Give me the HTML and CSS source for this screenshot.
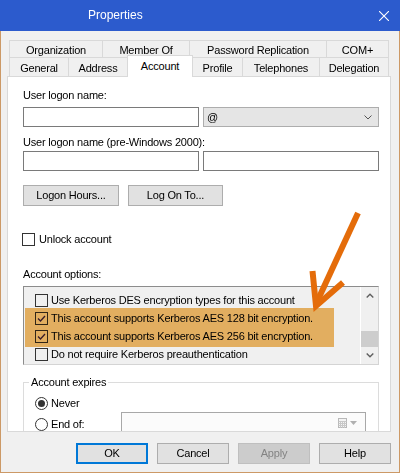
FILE: index.html
```html
<!DOCTYPE html>
<html>
<head>
<meta charset="utf-8">
<link rel="stylesheet" href="styles.css">
</head>
<body>
<div class="window">
  <div class="titlebar">
    <span class="title">Properties</span>
    <svg class="close" width="10" height="10" viewBox="0 0 10 10"><path d="M0 0L10 10M10 0L0 10" stroke="#fff" stroke-width="1.1" fill="none"/></svg>
  </div>
  <div class="client">
    <div class="tabs">
      <div class="tabrow row1">
        <div class="tab t-org">Organization</div>
        <div class="tab t-mem">Member Of</div>
        <div class="tab t-pwd">Password Replication</div>
        <div class="tab t-com last">COM+</div>
      </div>
      <div class="tabrow row2">
        <div class="tab t-gen">General</div>
        <div class="tab t-adr">Address</div>
        <div class="tab t-acc active">Account</div>
        <div class="tab t-pro">Profile</div>
        <div class="tab t-tel">Telephones</div>
        <div class="tab t-del last">Delegation</div>
      </div>
    </div>
    <div class="panel">
      <div class="label l1">User logon name:</div>
      <div class="field-row r1">
        <div class="input"></div>
        <div class="select"><span class="at">@</span><svg class="chev" width="8" height="5" viewBox="0 0 8 5"><path d="M0.5 0.5L4 4L7.5 0.5" stroke="#555" stroke-width="1" fill="none"/></svg></div>
      </div>
      <div class="label l2">User logon name (pre-Windows 2000):</div>
      <div class="field-row r2">
        <div class="input"></div>
        <div class="input wide"></div>
      </div>
      <div class="btn-row">
        <div class="btn b-hours">Logon Hours...</div>
        <div class="btn b-logon">Log On To...</div>
      </div>
      <div class="check-row unlock">
        <span class="cb"></span><span class="txt">Unlock account</span>
      </div>
      <div class="label l3">Account options:</div>
      <div class="listbox">
        <div class="items">
          <div class="item"><span class="cb"></span><span class="txt">Use Kerberos DES encryption types for this account</span></div>
          <div class="item"><span class="cb"><svg width="11" height="11" viewBox="0 0 11 11"><path d="M2 5.5L4.5 8L9 3" stroke="#3a2462" stroke-width="1.3" fill="none"/></svg></span><span class="txt">This account supports Kerberos AES 128 bit encryption.</span></div>
          <div class="item"><span class="cb"><svg width="11" height="11" viewBox="0 0 11 11"><path d="M2 5.5L4.5 8L9 3" stroke="#3a2462" stroke-width="1.3" fill="none"/></svg></span><span class="txt">This account supports Kerberos AES 256 bit encryption.</span></div>
          <div class="item"><span class="cb"></span><span class="txt">Do not require Kerberos preauthentication</span></div>
        </div>
        <div class="sb">
          <div class="sb-btn"><svg width="8" height="5" viewBox="0 0 8 5"><path d="M0.7 4.5L4 1.2L7.3 4.5" stroke="#606060" stroke-width="1.4" fill="none"/></svg></div>
          <div class="sb-track"><div class="sb-thumb"></div></div>
          <div class="sb-btn"><svg width="8" height="5" viewBox="0 0 8 5"><path d="M0.7 0.5L4 3.8L7.3 0.5" stroke="#606060" stroke-width="1.4" fill="none"/></svg></div>
        </div>
        <div class="highlight"></div>
      </div>
      <fieldset class="expires">
        <legend>Account expires</legend>
        <div class="radio-row">
          <span class="radio on"></span><span class="txt">Never</span>
        </div>
        <div class="radio-row endof">
          <span class="radio"></span><span class="txt rlabel">End of:</span>
          <div class="date">
            <svg class="cal" width="10" height="11" viewBox="0 0 10 11"><rect x="0.5" y="0.5" width="8" height="9" fill="#f4f4f4" stroke="#b8b8b8"/><path d="M0.5 3.5H8.5M0.5 5.5H8.5M0.5 7.5H8.5M2.5 3V10M4.5 3V10M6.5 3V10" stroke="#c8c8c8" stroke-width="1"/></svg>
            <svg class="tri" width="7" height="4" viewBox="0 0 7 4"><path d="M0 0H7L3.5 4Z" fill="#b0b0b0"/></svg>
          </div>
        </div>
      </fieldset>
    </div>
    <div class="dlg-buttons">
      <div class="btn dlg ok">OK</div>
      <div class="btn dlg">Cancel</div>
      <div class="btn dlg disabled">Apply</div>
      <div class="btn dlg">Help</div>
    </div>
  </div>
  <svg class="annot" width="400" height="473" viewBox="0 0 400 473">
    <path d="M358 213L316 304" stroke="#e46c0a" stroke-width="6" fill="none"/>
    <path d="M312.5 271L316 306L343 282.5" stroke="#e46c0a" stroke-width="6" fill="none" stroke-linejoin="miter"/>
  </svg>
</div>
</body>
</html>
```
FILE: styles.css
```css
* { box-sizing: border-box; }
html, body { margin: 0; padding: 0; }
body {
  width: 400px;
  height: 473px;
  overflow: hidden;
  font-family: "Liberation Sans", Arial, sans-serif;
  font-size: 11px;
  letter-spacing: -0.2px;
  color: #000;
  background: #f0f0f0;
}
.window {
  position: relative;
  width: 400px;
  height: 473px;
}
.titlebar {
  height: 31px;
  background: #2c5bcd;
  display: flex;
  align-items: center;
  color: #fff;
}
.title {
  font-size: 12px;
  letter-spacing: 0;
  line-height: 31px;
  padding-left: 88px;
}
.close {
  margin-left: auto;
  margin-right: 11px;
  display: block;
}
.client {
  height: 442px;
  background: #f0f0f0;
  border: 1px solid #cc9966;
  border-top: 0;
  overflow: hidden;
}
.tabs {
  margin: 9px 0 0 8px;
}
.tabrow {
  display: flex;
  align-items: flex-start;
}
.tab {
  border-top: 1px solid #d9d9d9;
  border-left: 1px solid #d9d9d9;
  background: #f0f0f0;
  text-align: center;
  white-space: nowrap;
}
.tab.last { border-right: 1px solid #d9d9d9; }
.row1 .tab {
  height: 17px;
  padding-top: 2px;
  line-height: 14px;
}
.row2 .tab {
  height: 19px;
  padding-top: 2px;
  line-height: 16px;
}
.row2 .tab.active {
  position: relative;
  z-index: 2;
  height: 22px;
  margin-top: -2px;
  margin-bottom: -1px;
  padding-top: 2px;
  background: #fff;
  border-right: 1px solid #d9d9d9;
}
.row2 .tab.active + .tab { border-left: 0; }
.t-org { width: 93px; }
.t-mem { width: 87px; }
.t-pwd { width: 137px; }
.t-com { width: 63px; }
.t-gen { width: 59px; }
.t-adr { width: 59px; }
.t-acc { width: 66px; }
.t-pro { width: 49px; }
.t-tel { width: 77px; }
.t-del { width: 70px; }

.panel {
  position: relative;
  margin-left: 6px;
  width: 384px;
  height: 356px;
  background: #fff;
  border: 1px solid #d9d9d9;
  padding: 12px 10px 0 15px;
  overflow: hidden;
}
.label {
  line-height: 13px;
  height: 13px;
  white-space: nowrap;
}
.l2 { margin-top: 9px; }
.l3 { margin-top: 22px; }
.field-row {
  display: flex;
  gap: 4px;
}
.r1 { margin-top: 5px; }
.r2 { margin-top: 2px; }
.input {
  width: 176px;
  height: 20px;
  border: 1px solid #7a7a7a;
  background: #fff;
}
.select {
  width: 176px;
  height: 20px;
  border: 1px solid #adadad;
  background: #e5e5e5;
  display: flex;
  align-items: center;
  padding: 0 6px 0 3px;
}
.at { line-height: 18px; }
.chev { margin-left: auto; display: block; }
.btn-row {
  display: flex;
  gap: 9px;
  margin-top: 14px;
}
.btn {
  height: 21px;
  border: 1px solid #adadad;
  background: #e1e1e1;
  text-align: center;
  line-height: 19px;
  white-space: nowrap;
}
.b-hours { width: 96px; }
.b-logon { width: 95px; }
.check-row {
  display: flex;
  align-items: center;
  gap: 4px;
  height: 13px;
  line-height: 13px;
}
.unlock { margin-top: 27px; margin-left: -1px; }
.cb {
  width: 13px;
  height: 13px;
  border: 1px solid #333;
  background: transparent;
  flex: none;
  display: flex;
  align-items: center;
  justify-content: center;
}
.cb svg { display: block; }
.listbox {
  position: relative;
  margin-top: 5px;
  width: 356px;
  height: 79px;
  border-top: 1px solid #8c8c8c;
  border-left: 1px solid #8c8c8c;
  border-right: 1px solid #d4d4d4;
  border-bottom: 1px solid #d4d4d4;
  background: #f0f0f0;
  display: flex;
}
.items {
  flex: 1;
  padding: 4px 0 0 11px;
}
.item {
  height: 18px;
  display: flex;
  align-items: center;
  gap: 3px;
  white-space: nowrap;
  line-height: 13px;
}
.sb {
  width: 18px;
  border-left: 1px solid #fff;
  display: flex;
  flex-direction: column;
  background: #f0f0f0;
}
.sb-btn {
  height: 17px;
  display: flex;
  align-items: center;
  justify-content: center;
}
.sb-btn svg { display: block; }
.sb-track {
  flex: 1;
  position: relative;
}
.sb-thumb {
  margin-top: 27px;
  height: 16px;
  background: #cdcdcd;
}
.highlight {
  position: absolute;
  left: 1px;
  top: 21px;
  width: 309px;
  height: 39px;
  background: #f1b966;
  mix-blend-mode: multiply;
}
.expires {
  margin: 11px 0 0 0;
  width: 356px;
  min-width: 0;
  border: 1px solid #dcdcdc;
  padding: 6px 10px 0 11px;
}
.expires legend {
  padding: 0 2px;
  margin-left: -6px;
  line-height: 13px;
}
.radio-row {
  display: flex;
  align-items: center;
  gap: 3px;
  height: 16px;
  white-space: nowrap;
}
.radio {
  width: 13px;
  height: 13px;
  border: 1px solid #333;
  border-radius: 50%;
  background: #fff;
  flex: none;
  display: flex;
  align-items: center;
  justify-content: center;
}
.radio.on::after {
  content: "";
  width: 7px;
  height: 7px;
  border-radius: 50%;
  background: #333;
}
.endof {
  margin-top: 2px;
  height: 22px;
}
.rlabel { width: 67px; }
.date {
  width: 245px;
  height: 22px;
  align-self: flex-start;
  margin-top: -1px;
  border: 1px solid #a8a8a8;
  background: #fbfbfb;
  display: flex;
  align-items: center;
  justify-content: flex-end;
  padding-right: 8px;
  gap: 2px;
}
.date svg { display: block; }
.dlg-buttons {
  display: flex;
  justify-content: flex-end;
  gap: 9px;
  margin-top: 11px;
  padding-right: 8px;
}
.btn.dlg { width: 72px; }
.btn.ok {
  border: 2px solid #0078d7;
  line-height: 17px;
}
.btn.disabled {
  background: #cccccc;
  border-color: #bfbfbf;
  color: #838383;
}
.annot {
  position: absolute;
  left: 0;
  top: 0;
  pointer-events: none;
}
```
